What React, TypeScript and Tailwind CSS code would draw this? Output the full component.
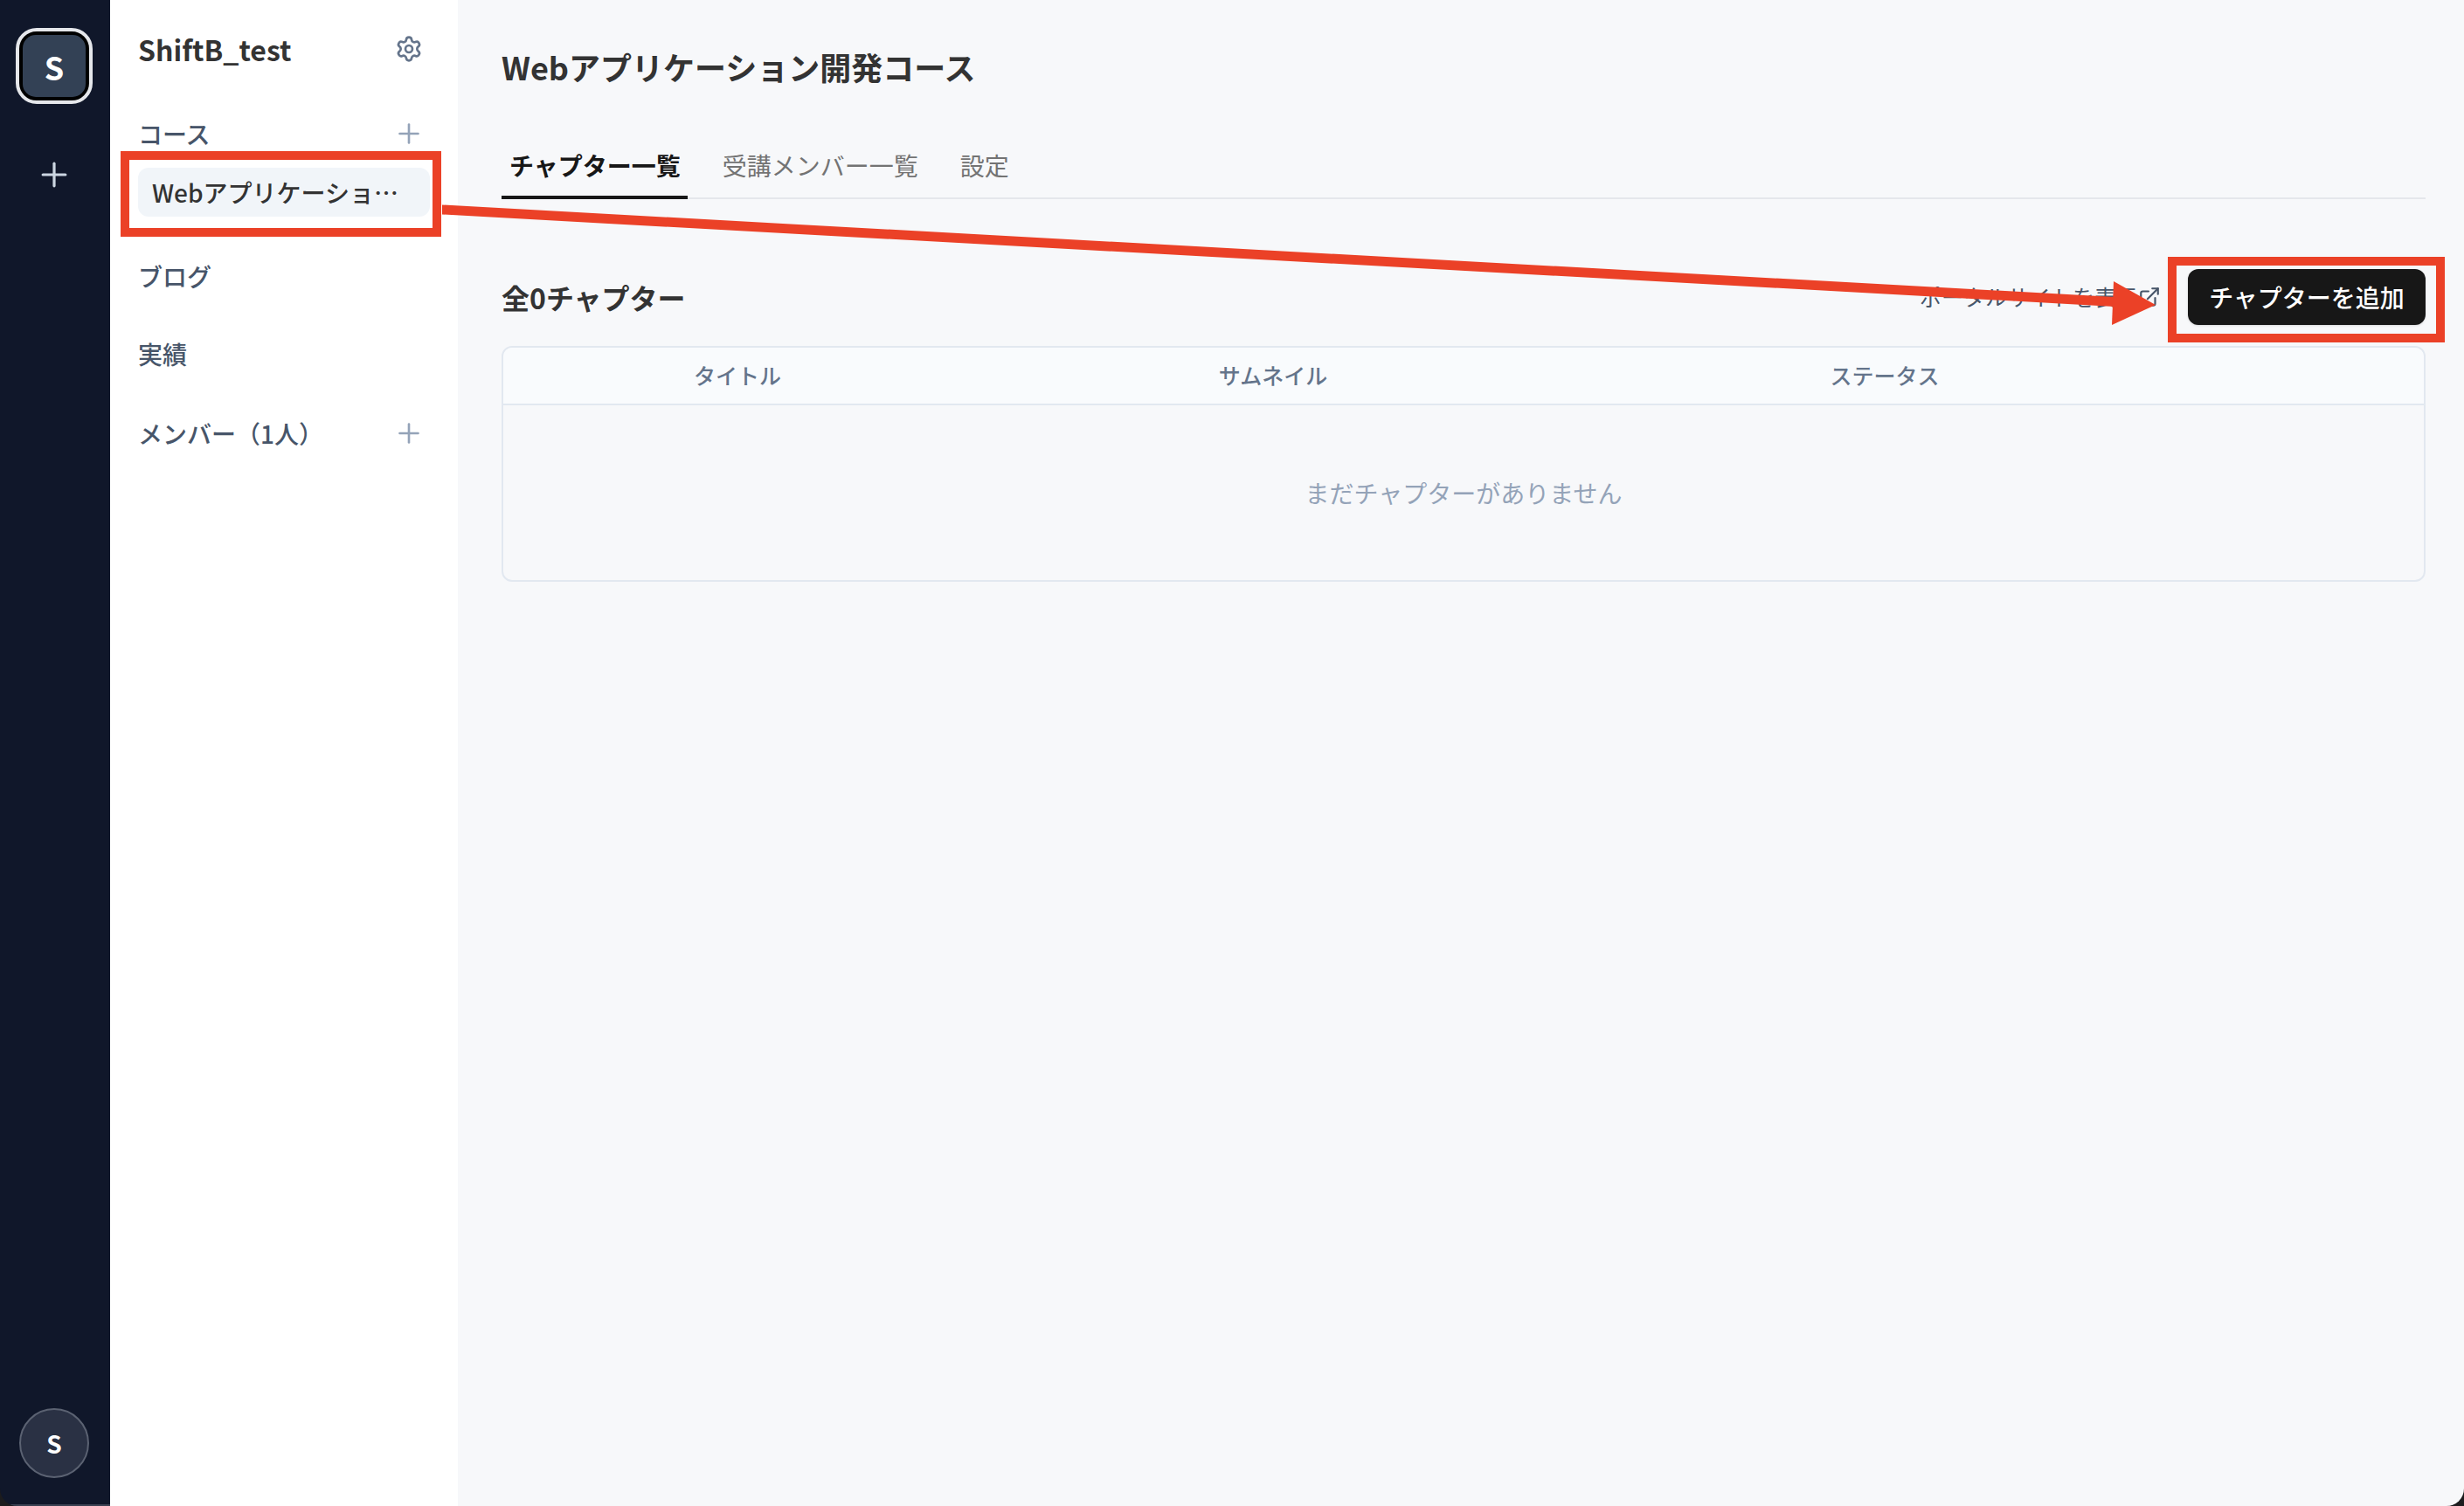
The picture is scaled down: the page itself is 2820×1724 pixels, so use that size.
import React from 'react';
import { ExternalLink, Plus, Settings } from 'lucide-react';

const font = "font-['Noto_Sans_CJK_JP','Noto_Sans',sans-serif]";

function SectionLabel({ label, add, className }: { label: string; add?: boolean; className: string }) {
  return (
    <div className={`flex h-[48px] items-center justify-between text-[28px] font-medium text-[#475569] ${className}`}>
      <span>{label}</span>
      {add && <Plus size={36} strokeWidth={1.75} className="mr-[6px] text-[#94a3b8]" />}
    </div>
  );
}

function Rail() {
  return (
    <aside className="flex w-[126px] shrink-0 flex-col items-center border-b-2 border-[#3a4152] bg-[#10172a] pt-[32px] pr-[2px] pb-[30px]">
      <div className="rounded-[24px] border-4 border-[#e5e7eb] bg-black p-[4px]">
        <div className="flex h-[71px] w-[72px] items-center justify-center rounded-[15px] bg-[#334155] text-[36px] font-bold text-white">
          S
        </div>
      </div>
      <Plus size={44} strokeWidth={1.75} className="mt-[59px] text-[#cbd5e1]" />
      <div className="mt-auto flex h-[80px] w-[80px] items-center justify-center rounded-full border-2 border-[#5b6272] bg-[#2a3144] text-[28px] font-bold text-white">
        S
      </div>
    </aside>
  );
}

function Sidebar() {
  return (
    <nav className="flex w-[398px] shrink-0 flex-col bg-white px-[32px] pt-[32px]">
      <div className="flex h-[48px] items-center justify-between pr-[8px]">
        <span className="text-[32px] font-bold text-[#333333]">ShiftB_test</span>
        <Settings size={32} strokeWidth={2} className="text-[#64748b]" />
      </div>
      <SectionLabel label="コース" add className="mt-[49px]" />
      <div className="mt-[15px] flex h-[56px] items-center rounded-[12px] bg-[#f1f5f9] px-[16px] text-[28px] font-medium text-[#333333]">
        <span className="truncate">Webアプリケーション開発コース</span>
      </div>
      <SectionLabel label="ブログ" className="mt-[44px]" />
      <SectionLabel label="実績" className="mt-[41px]" />
      <SectionLabel label="メンバー（1人）" add className="mt-[43px]" />
    </nav>
  );
}

function Tabs() {
  return (
    <div className="mt-[53px] flex h-[72px] gap-[32px] border-b-2 border-[#e5e7eb]">
      <div className="-mb-[2px] flex h-[72px] items-center border-b-4 border-[#171717] pr-[8px] pb-[2px] pl-[9px] text-[28px] font-bold text-[#171717]">
        チャプター一覧
      </div>
      <div className="-mb-[2px] flex h-[72px] items-center border-b-4 border-transparent px-[8px] pb-[2px] text-[28px] text-[#737373]">
        受講メンバー一覧
      </div>
      <div className="-mb-[2px] flex h-[72px] items-center border-b-4 border-transparent px-[8px] pb-[2px] text-[28px] text-[#737373]">
        設定
      </div>
    </div>
  );
}

function ChapterTable() {
  return (
    <div className="mt-[24px] flex h-[270px] flex-col overflow-hidden rounded-[12px] border-2 border-[#e2e8f0]">
      <div className="grid h-[66px] shrink-0 grid-cols-[536px_690px_710px_1fr] items-center border-b-2 border-[#e2e8f0] bg-[#f9fbfd] text-center text-[25px] font-medium text-[#64748b]">
        <span>タイトル</span>
        <span>サムネイル</span>
        <span>ステータス</span>
        <span />
      </div>
      <div className="flex flex-1 items-center justify-center text-[28px] text-[#94a3b8]">まだチャプターがありません</div>
    </div>
  );
}

function Main() {
  return (
    <main className="flex min-w-0 flex-1 flex-col bg-[#f7f8fa] pt-[49px] pr-[44px] pl-[50px]">
      <h1 className="h-[54px] text-[36px] leading-[54px] font-bold text-[#333333]">Webアプリケーション開発コース</h1>
      <Tabs />
      <div className="mt-[80px] flex h-[64px] items-center">
        <h2 className="text-[32px] font-bold text-[#333333]">全0チャプター</h2>
        <div className="ml-auto flex items-center text-[25px] text-[#475569]">
          ポータルサイトを表示
          <ExternalLink size={26} strokeWidth={2} />
        </div>
        <button className="ml-[31px] flex h-[64px] w-[272px] items-center justify-center rounded-[12px] bg-[#171717] text-[28px] font-medium text-white shadow-sm">
          チャプターを追加
        </button>
      </div>
      <ChapterTable />
    </main>
  );
}

// red annotations laid over the screenshot
function Annotations() {
  return (
    <>
      <div className="absolute top-[173px] left-[138px] h-[98px] w-[367px] border-[10px] border-[#eb4127]" />
      <div className="absolute top-[294px] left-[2481px] h-[98px] w-[317px] border-[10px] border-[#eb4127]" />
      <svg className="absolute top-0 left-0" width="2820" height="1724" viewBox="0 0 2820 1724" fill="none">
        <polygon points="506,234.5 2420,340 2420,351 506,245.5" fill="#eb4127" />
        <polygon points="2419,322 2467,349 2417,372" fill="#eb4127" />
      </svg>
    </>
  );
}

export default function App() {
  return (
    <div className={`relative h-[1724px] w-[2820px] overflow-hidden bg-[#1c1c1e] ${font}`}>
      <div className="flex h-full overflow-hidden rounded-b-[20px]">
        <Rail />
        <Sidebar />
        <Main />
      </div>
      <Annotations />
    </div>
  );
}
